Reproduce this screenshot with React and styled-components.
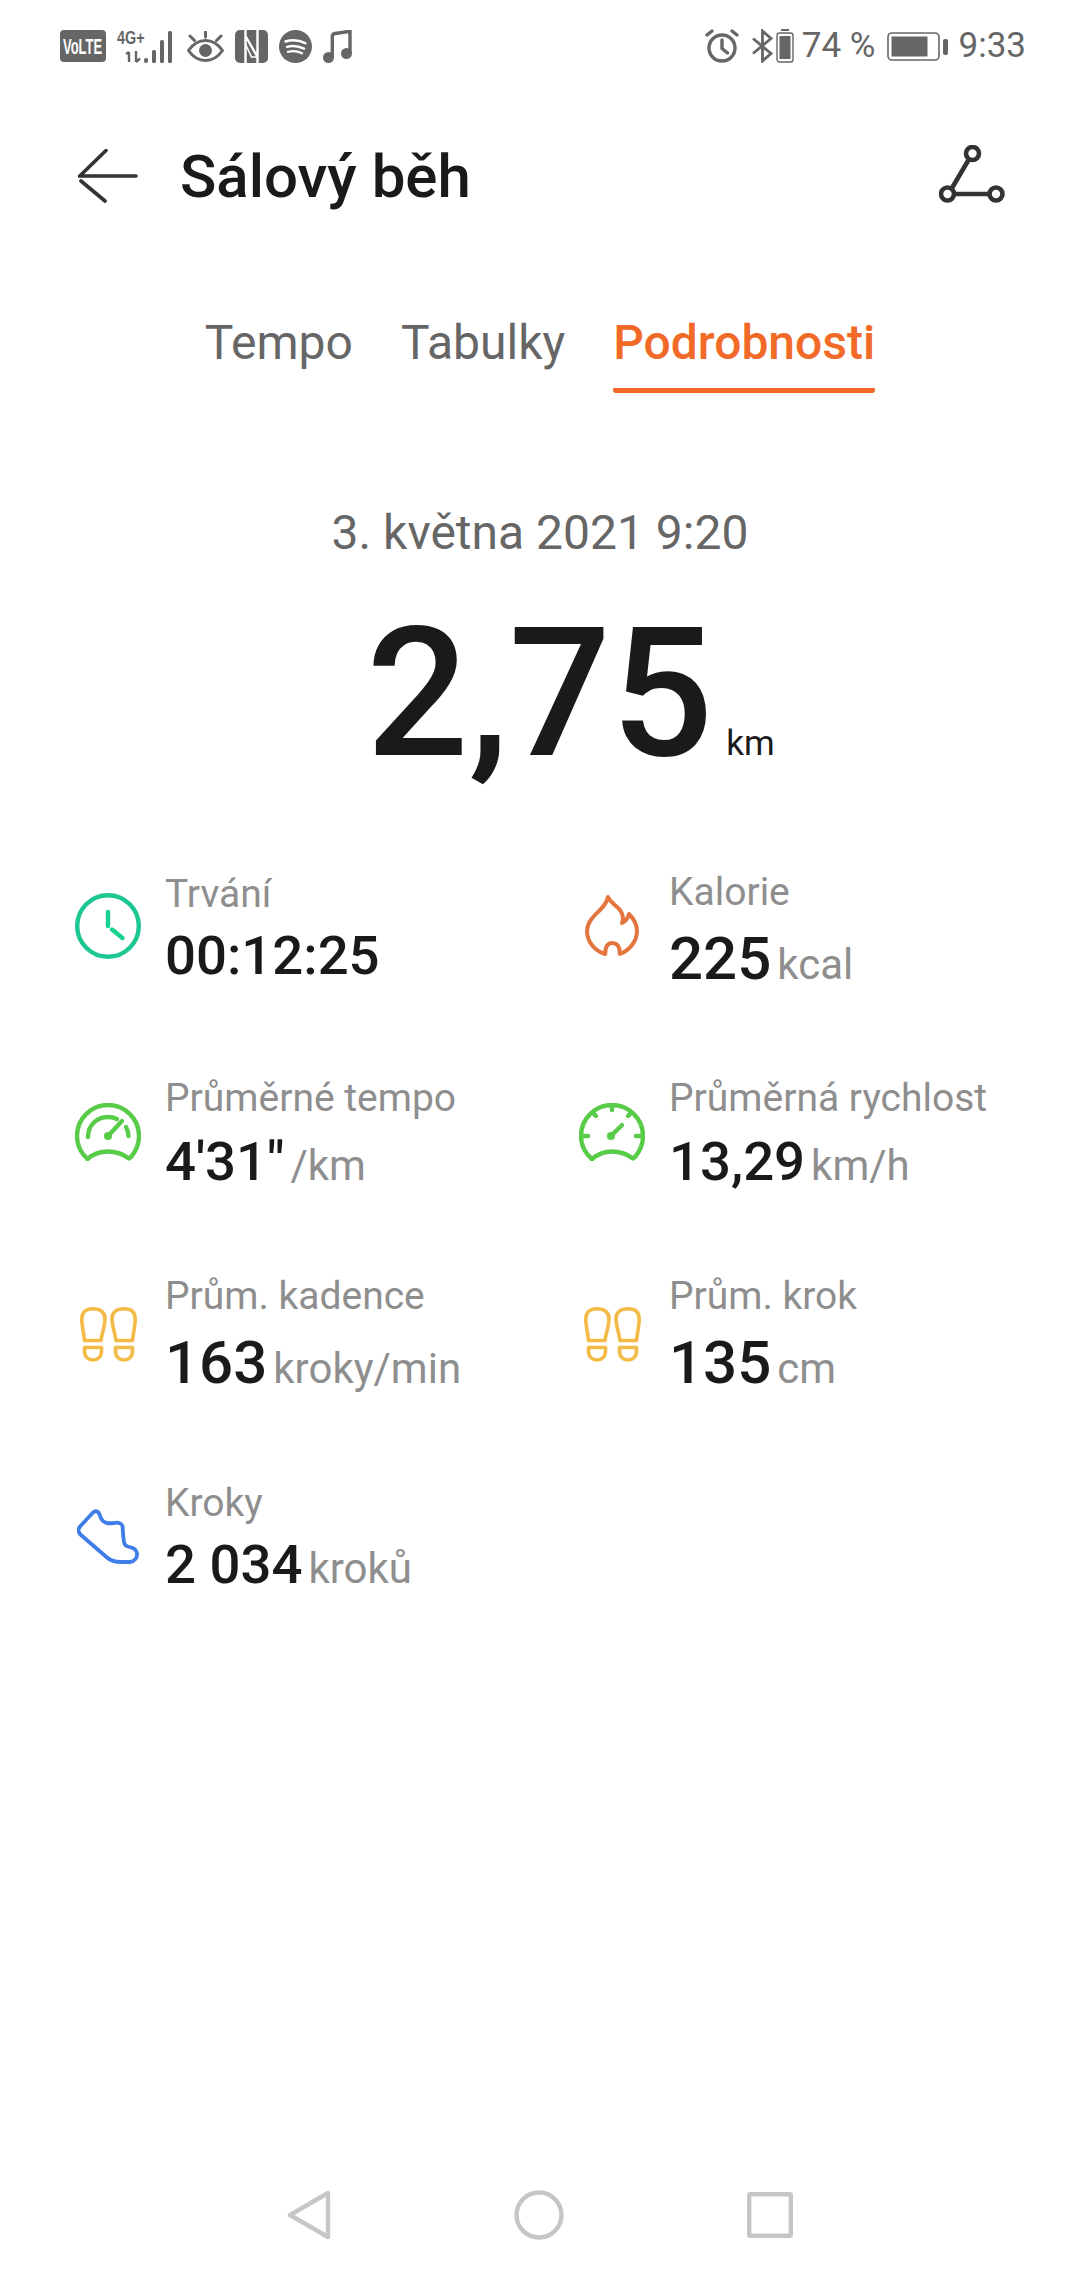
import React from "react"
import styled, { createGlobalStyle } from "styled-components"

const GlobalStyle = createGlobalStyle`
  html, body {
    margin: 0;
    padding: 0;
    background: #fff;
    font-family: Roboto, "Noto Sans", sans-serif;
  }
`

const Screen = styled.div`
  width: 1080px;
  height: 2280px;
  display: flex;
  flex-direction: column;
  background: #fff;
  overflow: hidden;
`

const StatusBar = styled.div`
  height: 92px;
  display: flex;
  align-items: center;
  justify-content: space-between;
  padding: 0 54px 0 60px;
  color: #666;
`

const StatusGroup = styled.div`
  display: flex;
  align-items: center;
  gap: ${(p) => p.$gap || 11}px;
  margin-left: ${(p) => p.$left || 0}px;
`

const BadgeText = styled.text`
  font-family: "Liberation Sans", sans-serif;
  font-size: 22px;
  font-weight: 700;
  fill: #fff;
`

const StatusText = styled.span`
  font-size: 35px;
  line-height: 40px;
  color: #666;
  margin-left: ${(p) => p.$left || 0}px;
`

const Header = styled.div`
  height: 116px;
  margin-top: 26px;
  display: flex;
  align-items: center;
  justify-content: space-between;
  padding: 0 75px 0 78px;
`

const HeaderLeft = styled.div`
  display: flex;
  align-items: center;
  gap: 42px;
`

const Title = styled.h1`
  margin: 0;
  font-size: 60px;
  font-weight: 500;
  color: #1a1a1a;
`

const Tabs = styled.div`
  display: flex;
  justify-content: center;
  gap: 48px;
  margin-top: 73px;
`

const Tab = styled.div`
  height: 86px;
  box-sizing: border-box;
  padding-top: 8px;
  font-size: 48px;
  line-height: 56px;
  font-weight: ${(p) => (p.$active ? 500 : 400)};
  color: ${(p) => (p.$active ? "#f26a27" : "#666")};
  border-bottom: 5px solid ${(p) => (p.$active ? "#f26a27" : "transparent")};
  border-radius: 0 0 3px 3px;
`

const DateLine = styled.div`
  margin-top: 112px;
  text-align: center;
  font-size: 48px;
  line-height: 56px;
  color: #666;
`

const Distance = styled.div`
  display: flex;
  justify-content: center;
  align-items: baseline;
  margin-top: 28px;
  padding-left: 61px;
  height: 210px;
  line-height: 210px;
  color: #1a1a1a;
`

const DistanceValue = styled.span`
  font-size: 180px;
  font-weight: 500;
`

const DistanceUnit = styled.span`
  font-size: 35px;
  margin-left: 13px;
`

const StatsGrid = styled.div`
  display: grid;
  grid-template-columns: 504px 1fr;
  grid-template-rows: 208px 204px 200px 206px;
  padding-left: 75px;
  margin-top: 23px;
`

const Stat = styled.div`
  display: flex;
  align-items: center;
  gap: 24px;
`

const IconSlot = styled.div`
  width: 66px;
  display: flex;
  justify-content: center;
  flex-shrink: 0;
`

const StatText = styled.div`
  display: flex;
  flex-direction: column;
  padding-top: ${(p) => p.$top}px;
`

const Label = styled.div`
  font-size: 39px;
  line-height: 48px;
  color: #8e8e8e;
`

const Value = styled.div`
  display: flex;
  align-items: baseline;
  gap: 6px;
  line-height: ${(p) => p.$line}px;
`

const Number = styled.span`
  font-size: ${(p) => p.$size || 54.5}px;
  font-weight: 500;
  color: #1a1a1a;
`

const Unit = styled.span`
  font-size: 42px;
  color: #8e8e8e;
`

const NavBar = styled.div`
  margin-top: auto;
  height: 120px;
  display: flex;
  align-items: flex-start;
  padding: 30px 0 0 287px;
  box-sizing: border-box;
  gap: 183px;
`

const SignalText = styled.text`
  font-family: "Liberation Sans", sans-serif;
  font-weight: 700;
  font-size: 18px;
  fill: #666;
`

const gray = "#666"

const VolteBadge = () => (
  <svg width="46" height="32" viewBox="0 0 46 32">
    <rect width="46" height="32" rx="4" fill={gray} />
    <BadgeText transform="translate(3 24) scale(0.59 1)">VoLTE</BadgeText>
  </svg>
)

const SignalIcon = () => (
  <svg width="59" height="33" viewBox="0 0 59 33">
    <SignalText transform="translate(0 14) scale(0.8 1)">4G+</SignalText>
    <path d="M12 22v10M9 24l3-2M19 21v11M19 32l4-3.500" stroke={gray} strokeWidth="2.400" fill="none" />
    <rect x="27" y="28" width="4" height="5" rx="2" fill={gray} />
    <rect x="35" y="20" width="4" height="13" rx="1.500" fill={gray} />
    <rect x="43" y="10" width="4" height="23" rx="1.500" fill={gray} />
    <rect x="51" y="1" width="4" height="32" rx="1.500" fill={gray} />
  </svg>
)

const EyeIcon = () => (
  <svg width="37" height="31" viewBox="0 0 37 31" fill="none" stroke={gray} strokeWidth="3" strokeLinecap="round">
    <path d="M18.500 1v5M3 5l4.500 4.500M34 5l-4.500 4.500" />
    <path d="M1.500 19.500C6 13 12 9.500 18.500 9.500S31 13 35.500 19.500C31 26 25 29.500 18.500 29.500S6 26 1.500 19.500Z" />
    <circle cx="18.500" cy="19.500" r="6.500" fill={gray} stroke="none" />
  </svg>
)

const NfcIcon = () => (
  <svg width="33" height="33" viewBox="0 0 33 33">
    <rect width="33" height="33" rx="5" fill={gray} />
    <path d="M10.500 0v33M22.500 0v33M10.500 6l12 21" stroke="#fff" strokeWidth="2.400" fill="none" />
    <path d="M10.500 14l6 13h6" stroke="#fff" strokeWidth="1.600" fill="none" />
  </svg>
)

const SpotifyIcon = () => (
  <svg width="33" height="33" viewBox="0 0 33 33">
    <circle cx="16.500" cy="16.500" r="16.500" fill={gray} />
    <path d="M6.500 11.500c6.500-2 13.500-1.500 20 1.800M8 16.800c5.500-1.500 11.500-1 17 1.800M9 21.800c4.500-1.200 9.500-.8 14 1.500" stroke="#fff" strokeWidth="2.400" strokeLinecap="round" fill="none" />
  </svg>
)

const NoteIcon = () => (
  <svg width="29" height="33" viewBox="0 0 29 33">
    <circle cx="5.500" cy="27.500" r="5.500" fill={gray} />
    <circle cx="23.500" cy="23.500" r="5.500" fill={gray} />
    <path d="M9.300 28V6.500C9.300 4.500 10.500 3.800 12 3.500l15-2.200v22" stroke={gray} strokeWidth="3.400" fill="none" />
  </svg>
)

const AlarmIcon = () => (
  <svg width="34" height="34" viewBox="0 0 34 34" fill="none" stroke={gray} strokeWidth="3.400" strokeLinecap="round">
    <circle cx="17" cy="19" r="13" />
    <path d="M17 11v8.500l5.500 4.500M2 6l5-4M32 6l-5-4" />
  </svg>
)

const BluetoothIcon = () => (
  <svg width="23" height="34" viewBox="0 0 23 34" fill="none" stroke={gray} strokeWidth="2.800">
    <path d="M2 9.500l18 15-8.500 7.500V2l8.500 7.500-18 15" />
  </svg>
)

const SmallBattery = () => (
  <svg width="18" height="34" viewBox="0 0 18 34">
    <rect x="5" y="0" width="8" height="2" fill={gray} />
    <rect x="1" y="4" width="16" height="29" rx="2.500" fill="none" stroke={gray} strokeWidth="1.400" />
    <rect x="3.500" y="7" width="11" height="23" fill={gray} />
  </svg>
)

const BigBattery = () => (
  <svg width="61" height="29" viewBox="0 0 61 29">
    <rect x="1" y="1" width="51" height="27" rx="4" fill="none" stroke={gray} strokeWidth="1.600" />
    <rect x="4.500" y="4.500" width="36" height="20" fill={gray} />
    <rect x="56" y="7" width="5" height="16" rx="2" fill={gray} />
  </svg>
)

const BackArrow = () => (
  <svg width="60" height="54" viewBox="0 0 60 54" fill="none" stroke="#333" strokeWidth="3.600" strokeLinecap="round">
    <path d="M28 1.500L1.800 27H58M3 32l24 20" />
  </svg>
)

const RouteIcon = () => (
  <svg width="66" height="58" viewBox="0 0 66 58" fill="none" stroke="#333" strokeWidth="4.600" style={{ marginTop: -4 }}>
    <circle cx="33.500" cy="8.500" r="6.500" />
    <circle cx="8.500" cy="49" r="6.500" />
    <circle cx="57" cy="49" r="6.500" />
    <path d="M29.500 15L13 43M15 49h35.500" />
  </svg>
)

const ClockIcon = () => (
  <svg width="66" height="66" viewBox="0 0 66 66" fill="none" stroke="#1cc793" strokeWidth="4.400" strokeLinecap="round">
    <circle cx="33" cy="33" r="30.800" />
    <path d="M33 19v14M37 36.500l10.500 8.500" stroke="#18d28f" />
  </svg>
)

const FlameIcon = () => (
  <svg width="54" height="62" viewBox="0 0 54 62" fill="none" stroke="#e3763f" strokeWidth="4" strokeLinejoin="round" strokeLinecap="round">
    <path d="M23 2c2 5 8 8 12 13 3 4 4 8 2 13 4-2 6-5 7-9 5 5 8 11 8 17 0 10-7 19-17 23-1-4 0-5-1-6-1-3-4-5-7-5s-5 2-6 5c-1 2 0 4-1 6C10 56 2 47 2 36 2 27 9 21 15 15c4-4 7-8 8-13Z" />
  </svg>
)

const GaugeFastIcon = () => (
  <svg width="66" height="58" viewBox="0 0 66 58" fill="none" stroke="#58cc48" strokeWidth="4.400" strokeLinecap="round">
    <path d="M12.500 56C6 50 2 42 2 33a31 31 0 0 1 62 0c0 8-3 15-8 21" />
    <path d="M12.500 56C18 51 25 48.500 33 48.500s15 2.500 21 7" />
    <path d="M13 34c0-12 9-20 20-20 3 0 6 .500 9 2M51 24c1.500 3 2.500 6 2.500 9M33 33l14-15" />
    <circle cx="33" cy="33" r="4" fill="#58cc48" stroke="none" />
  </svg>
)

const GaugeIcon = () => (
  <svg width="66" height="58" viewBox="0 0 66 58" fill="none" stroke="#58cc48" strokeWidth="4.400" strokeLinecap="round">
    <path d="M13 56C6 50 2 42 2 33a31 31 0 0 1 62 0c0 8-3 15-8 21" />
    <path d="M13 56c6-5 12-7.500 20-7.500s15 2.500 21 7" />
    <path d="M33 3v4M14 10l3 3M52 10l-3 3M5 33h4M61 33h-4M32 33l11-11" />
    <circle cx="32" cy="33" r="4" fill="#58cc48" stroke="none" />
  </svg>
)

const FeetIcon = () => (
  <svg width="57" height="55" viewBox="0 0 57 55" fill="none" stroke="#f3bb45" strokeWidth="3.600" strokeLinejoin="round">
    <path d="M4.500 33.500H21C22 26 25 19 25 12 25 5 20 1.800 13 1.800S1.800 5 1.800 12c0 7 2 14 2.700 21.500Z" />
    <path d="M4.500 40.500H21.500V44c0 6-4 9-8.500 9s-8.500-3-8.500-9Z" />
    <path d="M36 33.500h16.500c.7-7.500 2.700-14.500 2.700-21.500 0-7-4.200-10.200-11.200-10.200S32 5 32 12c0 7 3 14 4 21.500Z" />
    <path d="M35.500 40.500h17V44c0 6-4 9-8.500 9s-8.500-3-8.500-9Z" />
  </svg>
)

const ShoeIcon = () => (
  <svg width="62" height="56" viewBox="0 0 62 56" fill="none" stroke="#3f7de8" strokeWidth="3.800" strokeLinejoin="round">
    <path d="M3 17.500L16 3.500c2-2 4-1.500 5.500 0 1.500 2 1.500 6 4.500 8.500 3 3 7 2.500 12 1.800 3-.5 7 .7 7.500 3.200.5 5 .5 11 1.500 16 .5 3 2.500 4.500 5.500 5 3.500.7 7 2.500 7.500 6.500.5 4-2.500 8-7 8.500H44c-6 0-10-1-14-4.500L4 26c-3-2.500-3-6-1-8.500Z" />
  </svg>
)

const NavBack = () => (
  <svg width="44" height="50" viewBox="0 0 44 50" fill="none" stroke="#c6c6c6" strokeWidth="4.400" strokeLinejoin="round">
    <path d="M41 3v44L3 25Z" />
  </svg>
)

const NavHome = () => (
  <svg width="50" height="50" viewBox="0 0 50 50" fill="none" stroke="#c6c6c6" strokeWidth="4.400">
    <circle cx="25" cy="25" r="22.500" />
  </svg>
)

const NavRecent = () => (
  <svg width="46" height="46" viewBox="0 0 46 46" fill="none" stroke="#c6c6c6" strokeWidth="4.400" strokeLinejoin="round" style={{ marginTop: 2 }}>
    <rect x="2.200" y="2.200" width="41.600" height="41.600" rx="1" />
  </svg>
)

const stats = [
  { label: "Trvání", value: "00:12:25", top: 10, line: 74, icon: <ClockIcon /> },
  { label: "Kalorie", value: "225", unit: "kcal", size: 60, top: 24, line: 86, icon: <FlameIcon /> },
  { label: "Průměrné tempo", value: "4'31\"", unit: "/km", top: 14, line: 78, icon: <GaugeFastIcon /> },
  { label: "Průměrná rychlost", value: "13,29", unit: "km/h", top: 14, line: 78, icon: <GaugeIcon /> },
  { label: "Prům. kadence", value: "163", unit: "kroky/min", size: 60, top: 16, line: 86, icon: <FeetIcon /> },
  { label: "Prům. krok", value: "135", unit: "cm", size: 60, top: 16, line: 86, icon: <FeetIcon /> },
  { label: "Kroky", value: "2 034", unit: "kroků", top: 10, line: 74, icon: <ShoeIcon /> },
]

const App = () => {
  return (
    <Screen>
      <GlobalStyle />
      <StatusBar>
        <StatusGroup>
          <VolteBadge />
          <SignalIcon />
          <EyeIcon />
          <NfcIcon />
          <SpotifyIcon />
          <NoteIcon />
        </StatusGroup>
        <StatusGroup $gap={2}>
          <AlarmIcon />
          <StatusGroup $gap={2} $left={10}>
            <BluetoothIcon />
            <SmallBattery />
          </StatusGroup>
          <StatusText $left={6}>74 %</StatusText>
          <StatusGroup $left={9}>
            <BigBattery />
            <StatusText>9:33</StatusText>
          </StatusGroup>
        </StatusGroup>
      </StatusBar>

      <Header>
        <HeaderLeft>
          <BackArrow />
          <Title>Sálový běh</Title>
        </HeaderLeft>
        <RouteIcon />
      </Header>

      <Tabs>
        <Tab>Tempo</Tab>
        <Tab>Tabulky</Tab>
        <Tab $active>Podrobnosti</Tab>
      </Tabs>

      <DateLine>3. května 2021 9:20</DateLine>

      <Distance>
        <DistanceValue>2,75</DistanceValue>
        <DistanceUnit>km</DistanceUnit>
      </Distance>

      <StatsGrid>
        {stats.map((s) => (
          <Stat key={s.label}>
            <IconSlot>{s.icon}</IconSlot>
            <StatText $top={s.top}>
              <Label>{s.label}</Label>
              <Value $line={s.line}>
                <Number $size={s.size}>{s.value}</Number>
                {s.unit && <Unit>{s.unit}</Unit>}
              </Value>
            </StatText>
          </Stat>
        ))}
      </StatsGrid>

      <NavBar>
        <NavBack />
        <NavHome />
        <NavRecent />
      </NavBar>
    </Screen>
  )
}

export default App
